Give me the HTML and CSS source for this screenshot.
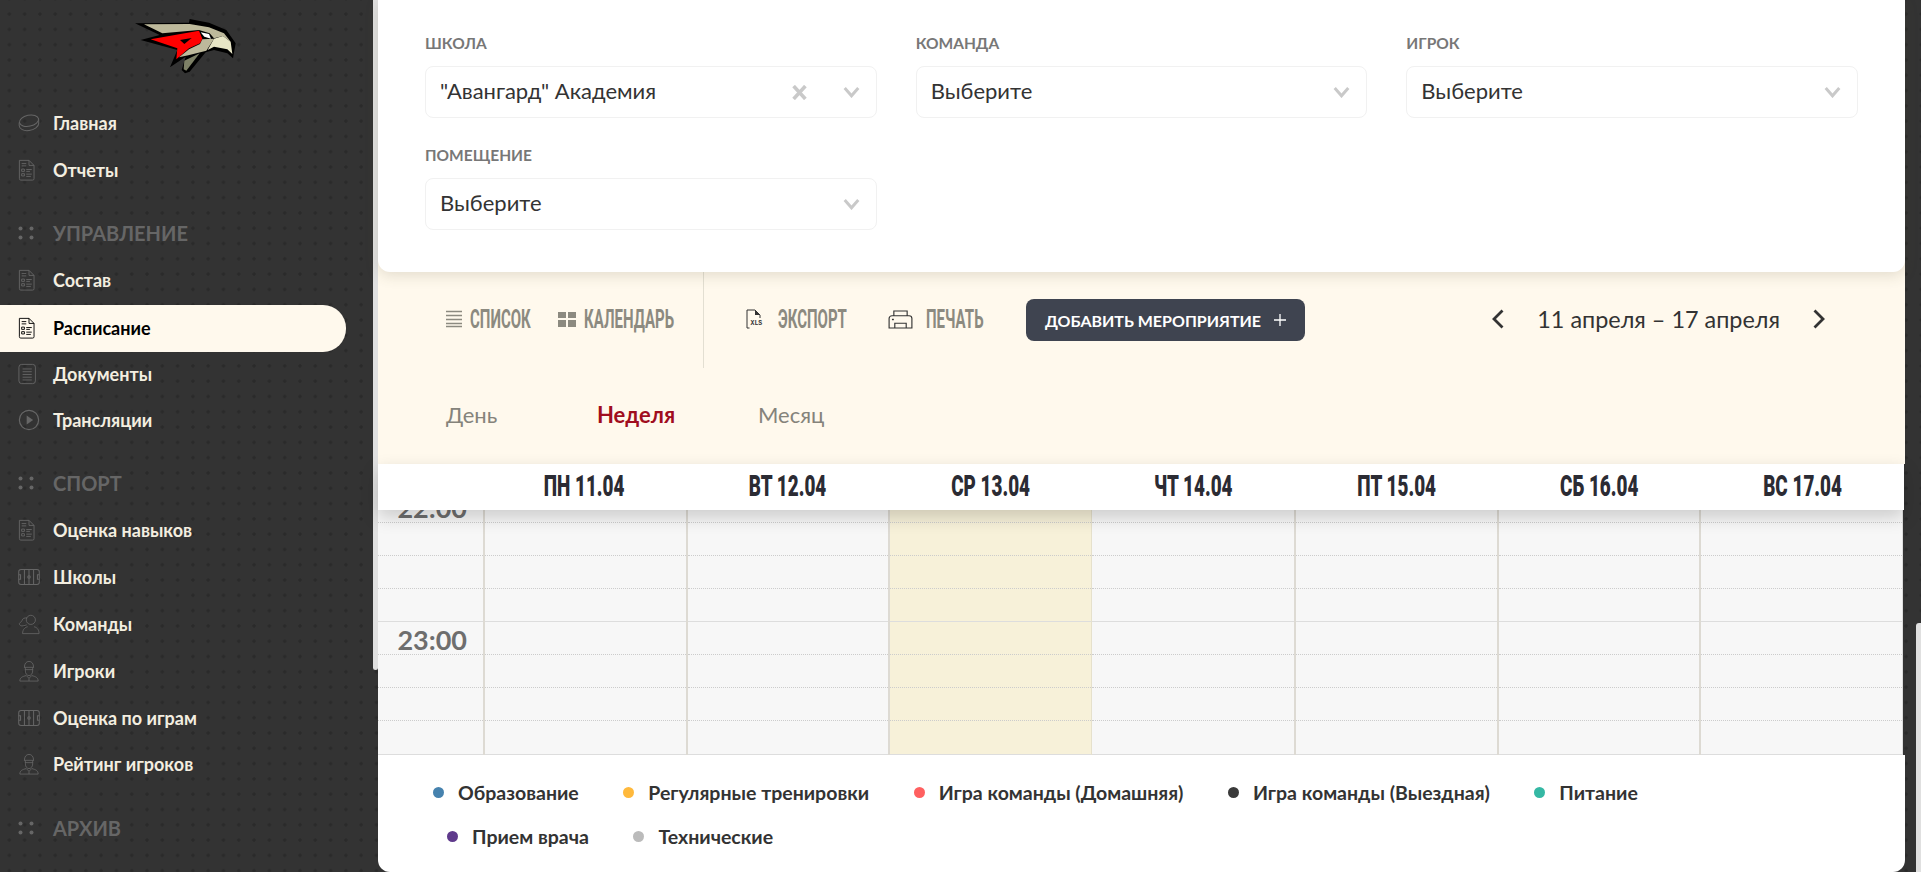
FILE: index.html
```html
<!DOCTYPE html>
<html lang="ru">
<head>
<meta charset="utf-8">
<title>Расписание</title>
<link rel="stylesheet" href="styles.css">
</head>
<body>
<svg class="defs" xmlns="http://www.w3.org/2000/svg">
  <symbol id="i-puck" viewBox="0 0 24 24"><g fill="none" stroke="currentColor" stroke-width="1.1"><ellipse cx="12" cy="9.5" rx="10.6" ry="6" transform="rotate(-12 12 9.5)"/><path d="M1.3 11.5v3.5c.3 3.5 5 6 10.7 5.2 6-.8 10.6-4.3 10.6-8V8"/></g></symbol>
  <symbol id="i-doc" viewBox="3 0 24 24"><g fill="none" stroke="currentColor" stroke-width="1"><path d="M4.5 1.5h10.5l5.5 5.5v14.5a1.5 1.500 0 0 1-1.500 1.500H6a1.500 1.500 0 0 1-1.500-1.500z"/><path d="M15 1.500v5.500h5.500M7 5h5M7 7.500h5M7 11h3v2.500H7zM7 16h3v2.500H7zM12 11.500h6M12 13.500h4M12 16.500h6M12 19h5"/></g></symbol>
  <symbol id="i-lines" viewBox="2 0 24 24"><g fill="none" stroke="currentColor" stroke-width="1"><rect x="3" y="1.500" width="18" height="21" rx="3"/><path d="M7 6.500h10M7 9.500h10M7 12.500h10M7 15.500h10M7 18.500h10"/></g></symbol>
  <symbol id="i-play" viewBox="0 0 24 24"><circle cx="12" cy="12" r="10.500" fill="none" stroke="currentColor" stroke-width="1.300"/><path d="M9.500 7l7 5-7 5z" fill="currentColor"/></symbol>
  <symbol id="i-rink" viewBox="0 0 24 18"><g fill="none" stroke="currentColor" stroke-width="1.100"><rect x=".8" y=".8" width="22.400" height="16.400" rx="2.500"/><path d="M7 .8v16.400M12 .8v16.400M17 .8v16.400M.8 6.500h2v5h-2M23.200 6.500h-2v5h2"/><circle cx="12" cy="9" r="1.400"/></g></symbol>
  <symbol id="i-team" viewBox="0 0 24 24"><g fill="none" stroke="currentColor" stroke-width=".9"><circle cx="14" cy="7.500" r="5"/><path d="M5 22.500c0-5 3-7 5.500-7.500M23 22.500c0-5-3-7-5.500-7.500M5 22.500h18M10 5.500c-3-.5-5 .5-5.500 2.500S2 10 1.500 11.500s2 3 4 2.500l4-1"/></g></symbol>
  <symbol id="i-player" viewBox="0 0 24 24"><g fill="none" stroke="currentColor" stroke-width=".9"><path d="M7 8c0-4 2-6.500 5-6.500S17 4 17 8M6.500 8h11M7.500 10.500h9M8 8v4c0 3 2 5 4 5s4-2 4-5V8"/><path d="M2 23c0-4 3-5 7-6l3 3 3-3c4 1 7 2 7 6zM12 20v3"/></g></symbol>
  <symbol id="i-dots" viewBox="0 0 16 14" preserveAspectRatio="xMinYMid"><g fill="currentColor"><circle cx="2.500" cy="2.500" r="2"/><circle cx="13.500" cy="2.500" r="2"/><circle cx="2.500" cy="11.500" r="2"/><circle cx="13.500" cy="11.500" r="2"/></g></symbol>
  <symbol id="i-chev" viewBox="0 0 16 12"><path d="M1.200 2l6.800 7.800L14.800 2" fill="none" stroke="currentColor" stroke-width="3"/></symbol>
</svg>

<div class="page">
  <aside class="sidebar">
    <div class="logo">
      <svg class="logo-svg" viewBox="0 0 540 270" xmlns="http://www.w3.org/2000/svg">
        <path fill="#000" d="M108 70L270 68 272 57 330 68 382 90 410 130 402 175 385 160 345 150 320 157 272 215 258 220 248 210 260 170 213 202 235 150 125 120 182 105z"/>
        <path fill="#bdb99b" d="M135 73L272 72 330 82 375 100 395 125 372 108 345 115 332 100 300 90 190 100z"/>
        <path fill="#f00" d="M155 118L300 92 310 116 303 130 270 145 232 178 235 145z"/>
        <path fill="#000" d="M243 120L278 114 256 132z"/>
        <path fill="#fff" d="M305 97L330 102 336 116 316 110z"/>
        <path fill="#bdb99b" d="M310 118L345 116 322 152 268 166 240 172 270 148 303 132z"/>
        <path fill="#7d8066" d="M256 182L302 160 262 212 254 208z"/>
        <path fill="#e8e6c6" d="M345 116L372 108 395 125 400 162 385 148 345 140 326 150z"/>
      </svg>
    </div>
    <nav class="nav">
      <a class="nav-item"><svg class="nav-ico"><use href="#i-puck"/></svg><span>Главная</span></a>
      <a class="nav-item"><svg class="nav-ico"><use href="#i-doc"/></svg><span>Отчеты</span></a>
      <div class="nav-head"><svg class="nav-ico nav-ico-dots"><use href="#i-dots"/></svg><span>УПРАВЛЕНИЕ</span></div>
      <a class="nav-item"><svg class="nav-ico"><use href="#i-doc"/></svg><span>Состав</span></a>
      <a class="nav-item nav-active"><svg class="nav-ico"><use href="#i-doc"/></svg><span>Расписание</span></a>
      <a class="nav-item"><svg class="nav-ico"><use href="#i-lines"/></svg><span>Документы</span></a>
      <a class="nav-item"><svg class="nav-ico"><use href="#i-play"/></svg><span>Трансляции</span></a>
      <div class="nav-head"><svg class="nav-ico nav-ico-dots"><use href="#i-dots"/></svg><span>СПОРТ</span></div>
      <a class="nav-item"><svg class="nav-ico"><use href="#i-doc"/></svg><span>Оценка навыков</span></a>
      <a class="nav-item"><svg class="nav-ico"><use href="#i-rink"/></svg><span>Школы</span></a>
      <a class="nav-item"><svg class="nav-ico"><use href="#i-team"/></svg><span>Команды</span></a>
      <a class="nav-item"><svg class="nav-ico"><use href="#i-player"/></svg><span>Игроки</span></a>
      <a class="nav-item"><svg class="nav-ico"><use href="#i-rink"/></svg><span>Оценка по играм</span></a>
      <a class="nav-item"><svg class="nav-ico"><use href="#i-player"/></svg><span>Рейтинг игроков</span></a>
      <div class="nav-head"><svg class="nav-ico nav-ico-dots"><use href="#i-dots"/></svg><span>АРХИВ</span></div>
    </nav>
  </aside>
  <div class="side-scroll"></div>

  <main class="main">
    <section class="filters">
      <div class="field">
        <label class="field-label">Школа</label>
        <div class="select"><span class="select-text">"Авангард" Академия</span><svg class="select-x" viewBox="0 0 14 14"><path d="M1.500 1l11 12M12.500 1l-11 12" stroke="currentColor" stroke-width="3.400" fill="none"/></svg><svg class="select-chev"><use href="#i-chev"/></svg></div>
      </div>
      <div class="field">
        <label class="field-label">Команда</label>
        <div class="select"><span class="select-text">Выберите</span><svg class="select-chev"><use href="#i-chev"/></svg></div>
      </div>
      <div class="field">
        <label class="field-label">Игрок</label>
        <div class="select"><span class="select-text">Выберите</span><svg class="select-chev"><use href="#i-chev"/></svg></div>
      </div>
      <div class="field">
        <label class="field-label">Помещение</label>
        <div class="select"><span class="select-text">Выберите</span><svg class="select-chev"><use href="#i-chev"/></svg></div>
      </div>
    </section>

    <section class="toolbar">
      <div class="tool-row">
        <div class="views">
          <a class="tool"><svg class="tool-ico-list" viewBox="0 0 16 18"><path d="M0 1.500h16M0 5.500h16M0 9.500h16M0 13.500h16M0 16.500h16" stroke="currentColor" stroke-width="1.400"/></svg><span class="tool-box tool-box-list"><span class="tool-text">Список</span></span></a>
          <a class="tool"><svg class="tool-ico-grid" viewBox="0 0 18 15"><path d="M0 0h8v6H0zM10 0h8v6h-8zM0 8h8v7H0zM10 8h8v7h-8z" fill="currentColor"/></svg><span class="tool-box tool-box-cal"><span class="tool-text">Календарь</span></span></a>
        </div>
        <a class="tool tool-export"><svg class="tool-ico-xls" viewBox="0 0 20 20"><path d="M1 11V1h8l5 5v3M1 11v8h2.500" fill="none" stroke="#333" stroke-width="1"/><path d="M9 1v5h5z" fill="#333"/><text x="4.500" y="15.500" class="xls-text">XLS</text></svg><span class="tool-box tool-box-exp"><span class="tool-text">Экспорт</span></span></a>
        <a class="tool tool-print"><svg class="tool-ico-print" viewBox="0 0 26 20"><g fill="none" stroke="#333" stroke-width="1.200"><path d="M6 6V1h14v5M1 19V9a3 3 0 0 1 3-3h18a3 3 0 0 1 3 3v10zM7 19v-5h12v5"/></g><path d="M4 10h2" stroke="#333" stroke-width="1.500"/></svg><span class="tool-box tool-box-print"><span class="tool-text">Печать</span></span></a>
        <button class="add-btn">Добавить мероприятие<svg class="add-plus" viewBox="0 0 14 14"><path d="M7 1v12M1 7h12" stroke="currentColor" stroke-width="1.300"/></svg></button>
        <div class="date-nav">
          <svg class="date-arrow" viewBox="0 0 13 20"><path d="M11.500 1.500L3 10l8.500 8.500" fill="none" stroke="currentColor" stroke-width="2.800"/></svg>
          <span class="date-text">11 апреля – 17 апреля</span>
          <svg class="date-arrow" viewBox="0 0 13 20"><path d="M1.500 1.500L10 10l-8.500 8.500" fill="none" stroke="currentColor" stroke-width="2.800"/></svg>
        </div>
      </div>
      <div class="tabs">
        <a class="tab tab-day">День</a>
        <a class="tab tab-week">Неделя</a>
        <a class="tab">Месяц</a>
      </div>
    </section>

    <section class="calendar">
      <div class="cal-head">
        <div class="cal-head-spacer"></div>
        <div class="cal-day"><span class="cal-day-text">ПН 11.04</span></div>
        <div class="cal-day"><span class="cal-day-text">ВТ 12.04</span></div>
        <div class="cal-day"><span class="cal-day-text">СР 13.04</span></div>
        <div class="cal-day"><span class="cal-day-text">ЧТ 14.04</span></div>
        <div class="cal-day"><span class="cal-day-text">ПТ 15.04</span></div>
        <div class="cal-day"><span class="cal-day-text">СБ 16.04</span></div>
        <div class="cal-day"><span class="cal-day-text">ВС 17.04</span></div>
      </div>
      <div class="cal-view">
        <div class="cal-grid">
          <div class="col col-time"><div class="slot slot-time">22:00</div><div class="slot"></div><div class="slot"></div><div class="slot slot-hour"></div><div class="slot slot-time">23:00</div><div class="slot"></div><div class="slot"></div><div class="slot slot-hour"></div></div>
          <div class="col"><div class="slot"></div><div class="slot"></div><div class="slot"></div><div class="slot slot-hour"></div><div class="slot"></div><div class="slot"></div><div class="slot"></div><div class="slot slot-hour"></div></div>
          <div class="col"><div class="slot"></div><div class="slot"></div><div class="slot"></div><div class="slot slot-hour"></div><div class="slot"></div><div class="slot"></div><div class="slot"></div><div class="slot slot-hour"></div></div>
          <div class="col col-today"><div class="slot"></div><div class="slot"></div><div class="slot"></div><div class="slot slot-hour"></div><div class="slot"></div><div class="slot"></div><div class="slot"></div><div class="slot slot-hour"></div></div>
          <div class="col"><div class="slot"></div><div class="slot"></div><div class="slot"></div><div class="slot slot-hour"></div><div class="slot"></div><div class="slot"></div><div class="slot"></div><div class="slot slot-hour"></div></div>
          <div class="col"><div class="slot"></div><div class="slot"></div><div class="slot"></div><div class="slot slot-hour"></div><div class="slot"></div><div class="slot"></div><div class="slot"></div><div class="slot slot-hour"></div></div>
          <div class="col"><div class="slot"></div><div class="slot"></div><div class="slot"></div><div class="slot slot-hour"></div><div class="slot"></div><div class="slot"></div><div class="slot"></div><div class="slot slot-hour"></div></div>
          <div class="col col-last"><div class="slot"></div><div class="slot"></div><div class="slot"></div><div class="slot slot-hour"></div><div class="slot"></div><div class="slot"></div><div class="slot"></div><div class="slot slot-hour"></div></div>
        </div>
      </div>
    </section>

    <section class="legend">
      <div class="legend-row">
        <div class="legend-item"><i class="dot dot-blue"></i>Образование</div>
        <div class="legend-item"><i class="dot dot-yellow"></i>Регулярные тренировки</div>
        <div class="legend-item"><i class="dot dot-red"></i>Игра команды (Домашняя)</div>
        <div class="legend-item"><i class="dot dot-dark"></i>Игра команды (Выездная)</div>
        <div class="legend-item"><i class="dot dot-teal"></i>Питание</div>
      </div>
      <div class="legend-row legend-row-second">
        <div class="legend-item"><i class="dot dot-purple"></i>Прием врача</div>
        <div class="legend-item"><i class="dot dot-grey"></i>Технические</div>
      </div>
    </section>
  </main>

  <div class="page-scroll"><div class="page-thumb"></div></div>
</div>
</body>
</html>
```

FILE: styles.css
```css
* { box-sizing: border-box; }
html, body { margin: 0; height: 100%; }
body {
  font-family: Lato, "Open Sans", "Liberation Sans", sans-serif;
  background-color: #333;
  background-image: radial-gradient(circle, #2a2a2a 1.4px, transparent 1.8px);
  background-size: 15.3px 15.3px;
  background-position: 1.7px 6.4px;
  overflow: hidden;
}
.defs { display: none; }
.page { display: flex; width: 1921px; height: 872px; overflow: hidden; }

/* sidebar */
.sidebar { width: 373px; flex: none; height: 872px; overflow: hidden; }
.logo { height: 99.7px; padding-left: 5px; display: flex; justify-content: center; }
.logo-svg { width: 180px; height: 90px; display: block; }
.nav { display: flex; flex-direction: column; }
.nav-item, .nav-head { display: flex; align-items: center; height: 46.84px; padding-left: 18px; flex: none; }
.nav-item { color: #f3eee0; font-size: 18px; font-weight: 700; }
.nav-ico { width: 22px; height: 24px; margin-right: 13px; color: #666; flex: none; }
.nav-head { margin-top: 16.3px; color: #666; font-size: 20px; font-weight: 700; }
.nav-ico-dots { height: 14px; }
.nav-active { width: 346px; margin-top: 1.5px; margin-bottom: -1.5px; background: #fff9ed; color: #000; border-radius: 0 23px 23px 0; }
.nav-active .nav-ico { color: #000; }
.side-scroll { width: 5px; height: 670px; flex: none; background: #e0e0e0; border-radius: 0 0 3px 3px; }

/* main */
.main { width: 1527px; flex: none; height: 872px; display: flex; flex-direction: column; }
.filters {
  position: relative; z-index: 2;
  display: grid; grid-template-columns: repeat(3, 1fr); column-gap: 39px; row-gap: 25px; align-content: start;
  height: 272px; padding: 31px 47px 0; background: #fff; border-radius: 0 0 12px 12px;
  box-shadow: 0 4px 14px rgba(90, 80, 50, .16);
}
.field { min-width: 0; }
.field-label { display: block; height: 24px; line-height: 24px; margin-bottom: 11px; font-size: 15.5px; font-weight: 700; color: #777; text-transform: uppercase; }
.select { display: flex; align-items: center; height: 52px; padding: 0 16px 0 14px; border: 1px solid #f1f1f1; border-radius: 8px; }
.select-text { flex: 1; font-size: 22px; line-height: 48px; height: 50px; color: #333; }
.select-x { width: 15px; height: 15px; color: #c9c9c9; margin-right: 36px; margin-left: -6px; }
.select-chev { width: 17px; height: 12px; color: #c9c9c9; }

/* toolbar */
.toolbar { margin-top: -12px; padding-top: 12px; background: #fff9ed; height: 204px; flex: none; }
.tool-row { display: flex; align-items: center; height: 96px; padding-right: 79px; }
.views { display: flex; align-items: center; gap: 28px; width: 326px; height: 96px; padding: 0 0 2px 68px; border-right: 1px solid #e3dfd2; flex: none; }
.tool { display: flex; align-items: center; color: #8c8a80; }
.tool-row > .tool { margin-bottom: 2px; }
.tool-box { display: block; white-space: nowrap; }
.tool-box-list { width: 60px; }
.tool-box-cal { width: 92px; }
.tool-box-exp { width: 68px; }
.tool-box-print { width: 58px; }
.tool-text { display: inline-block; transform-origin: 0 50%; transform: scaleX(.6); font-family: Roboto, "Liberation Sans", sans-serif; font-weight: 700; font-size: 25px; text-transform: uppercase; }
.tool-ico-list { width: 16px; height: 18px; margin-right: 8px; }
.tool-ico-grid { width: 18px; height: 15px; margin-right: 8px; }
.tool-ico-xls { width: 20px; height: 20px; margin-right: 12px; }
.xls-text { font-family: "Liberation Mono", monospace; font-size: 6.500px; font-weight: 700; fill: #333; }
.tool-export { margin-left: 42px; }
.tool-print { margin-left: 42px; }
.tool-ico-print { width: 25px; height: 19px; margin-right: 13px; }
.add-btn {
  display: flex; align-items: center; justify-content: space-between;
  margin-left: 42px; width: 279px; height: 42px; padding: 0 18px 0 19px; border: 0; border-radius: 8px;
  background: #3f4450; color: #fff; font-family: inherit; font-size: 16px; font-weight: 700; text-transform: uppercase;
}
.add-plus { width: 14px; height: 14px; }
.date-nav { display: flex; align-items: center; gap: 33px; margin-left: auto; margin-bottom: 2px; color: #333; }
.date-arrow { width: 13px; height: 20px; }
.date-text { font-size: 23.400px; color: #333; }
.tabs { display: flex; align-items: center; height: 92px; padding-left: 68px; }
.tab { font-size: 22px; color: #85837b; }
.tab-day { width: 151px; }
.tab-week { width: 161px; color: #a00d1e; font-weight: 700; }

/* calendar */
.calendar { display: flex; flex-direction: column; flex: none; }
.cal-head {
  position: relative; z-index: 1;
  display: grid; grid-template-columns: 105px repeat(7, 1fr); width: 1526px; height: 46px; align-items: center;
  background: #fff; box-shadow: 0 7px 18px rgba(0, 0, 0, .18);
}
.cal-day { text-align: center; white-space: nowrap; line-height: 44px; height: 46px; }
.cal-day-text { display: inline-block; transform: scaleX(.64); font-family: Roboto, "Liberation Sans", sans-serif; font-size: 29.500px; font-weight: 900; color: #2b2b33; }
.cal-view { height: 245px; overflow: hidden; }
.cal-grid { display: grid; grid-template-columns: 105px repeat(7, 1fr); width: 1525px; margin-top: -20px; background: #f7f7f7; border-right: 1px solid #ddd; }
.col { border-left: 2.500px solid #dddad3; }
.col-time { border-left: 0; }
.col-today { background: #f7f1d9; }
.col-today + .col { border-left: 1px solid #e6e1cc; }
.slot { height: 33px; border-bottom: 1px dotted #ccc; }
.slot-hour { border-bottom: 1px solid #ddd; }
.col .slot:last-child { height: 34px; }
.slot-time { padding-right: 16px; text-align: right; line-height: 35px; font-size: 27px; font-weight: 700; color: #6e6e6e; white-space: nowrap; }

/* legend */
.legend { flex: none; height: 117px; padding-top: 15px; background: #fff; border-radius: 0 0 12px 12px; }
.legend-row { display: flex; align-items: center; gap: 44.500px; height: 44px; padding-left: 55px; }
.legend-row-second { padding-left: 69px; }
.legend-item { display: flex; align-items: center; font-size: 19.500px; font-weight: 700; color: #333; }
.dot { width: 11px; height: 11px; border-radius: 50%; margin-right: 14px; flex: none; }
.dot-blue { background: #4682ae; }
.dot-yellow { background: #ffb93c; }
.dot-red { background: #ff6060; }
.dot-dark { background: #3a3a3a; }
.dot-teal { background: #35b8a4; }
.dot-purple { background: #5f3a8c; }
.dot-grey { background: #bbb; }

/* page scrollbar */
.page-scroll { flex: 1; display: flex; justify-content: flex-end; padding-top: 623px; }
.page-thumb { width: 5px; height: 249px; background: #e0e0e0; border-radius: 3px 0 0 0; }
```
